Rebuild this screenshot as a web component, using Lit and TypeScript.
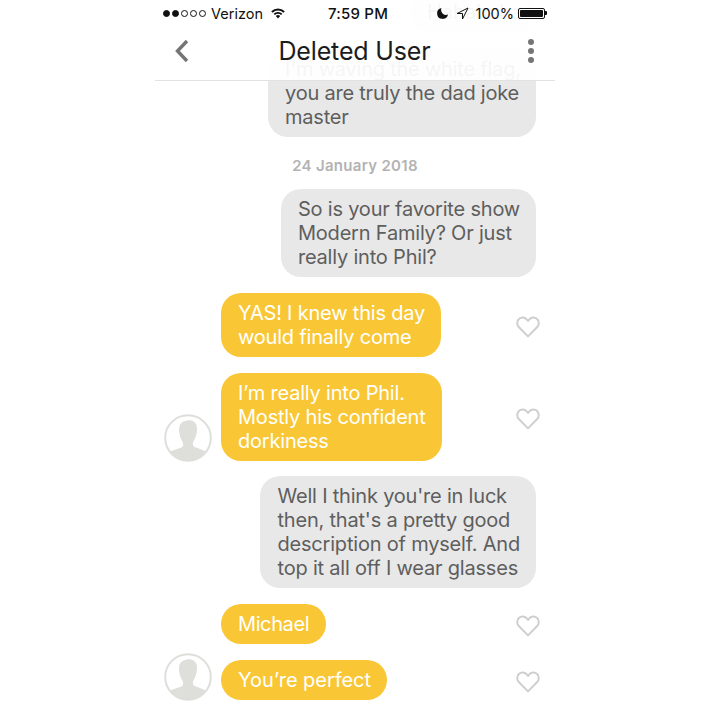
import { LitElement, html, css } from "lit";
import { customElement } from "lit/decorators.js";

const heart = html`<svg class="heart" viewBox="0 0 24 22" width="24" height="22"><path d="M12 20.4 3 11.2C.6 8.7.7 5 2.900 3 5.200.9 8.700 1.200 10.600 3.300L12 4.900l1.400-1.600C15.300 1.200 18.800.9 21.100 3c2.200 2 2.300 5.700-.1 8.200Z" fill="none" stroke="#cfcfcf" stroke-width="2" stroke-linejoin="round"/></svg>`;

const avatar = html`<svg class="avatar" viewBox="0 0 48 48" width="48" height="48"><defs><clipPath id="c"><circle cx="24" cy="24" r="22.800"/></clipPath></defs><g clip-path="url(#c)"><path d="M24 6.500c-6 0-9 3.700-9 9 0 3 .7 6.800 2 9.500 1 2.200 2.200 3.600 2.200 5.500 0 2-1.200 3-4 3.800L6 37.500 3 48h42l-3-10.500-9.200-3.700c-2.800-.8-4-1.800-4-3.800 0-1.900 1.200-3.300 2.200-5.500 1.300-2.700 2-6.500 2-9.500 0-5.300-3-9-9-9Z" fill="#dededb"/></g><circle cx="24" cy="24" r="22.800" fill="none" stroke="#dededb" stroke-width="2"/></svg>`;

@customElement("app-root")
export class AppRoot extends LitElement {
  static styles = css`
    :host { display: block; width: 709px; height: 709px; overflow: hidden; background: #fff; font-family: Inter, "Liberation Sans", sans-serif; }
    .phone { position: relative; width: 400px; height: 709px; margin-left: 155px; overflow: hidden; }
    .list { display: flex; flex-direction: column; padding: 0 19px 0 10px; }
    .top { align-self: flex-end; margin-top: -8px; height: 41px; width: 126px; box-sizing: border-box; padding: 8px 17px; background: #e8e8e8; border-radius: 20px; color: #5c5c5c; font-size: 20px; line-height: 24px; margin-bottom: 16px; white-space: nowrap; }
    .row { display: flex; align-items: flex-end; margin-bottom: 16px; }
    .row.out { justify-content: flex-end; }
    .row.first { margin-bottom: 0; }
    .row.tight { margin-bottom: 15px; }
    .bubble { box-sizing: border-box; padding: 8px 16px 8px 17px; border-radius: 20px; font-size: 20px; line-height: 24px; letter-spacing: -0.2px; white-space: pre-line; }
    .first .bubble { width: 268px; padding: 8px 10px 8px 17px; letter-spacing: -0.22px; }
    .out .bubble { background: #e8e8e8; color: #5e5e5e; }
    .in .bubble { background: #f9c735; color: #fff; }
    .bubble.name { letter-spacing: -0.4px; padding-right: 17px; }
    .bubble.wide { letter-spacing: -0.05px; }
    .date { text-align: center; color: #b3b3b3; font-size: 15px; font-weight: 600; line-height: 20px; margin: 0 0 13px; padding: 19px 0 0 9px; letter-spacing: 0.3px; }
    .slot { width: 48px; height: 48px; margin: -7px 9px -1px -1px; flex: none; }
    .avatar { display: block; }
    .like { margin-left: auto; align-self: center; display: flex; margin-right: -4px; padding-top: 4px; }
    .heart { display: block; }
    .bar { position: absolute; top: 0; left: 0; right: 0; height: 80px; background: rgba(255,255,255,0.94); border-bottom: 1px solid #e2e2e2; }
    .status { display: flex; align-items: center; height: 26px; padding: 0 8px; font-size: 14.500px; color: #111; position: relative; }
    .dots { display: flex; gap: 2px; margin-right: 5px; }
    .dot { width: 7px; height: 7px; border-radius: 50%; border: 1px solid #111; box-sizing: border-box; }
    .dot.on { background: #111; }
    .wifi { margin-left: 7px; }
    .clock { position: absolute; left: 173px; font-size: 15px; font-weight: 500; letter-spacing: 0.2px; }
    .right { margin-left: auto; display: flex; align-items: center; gap: 4px; }
    .moon { margin-right: 3px; }
    .loc { margin-right: 3px; }
    .batt { width: 27px; height: 11px; border: 1px solid #111; border-radius: 2px; box-sizing: border-box; padding: 1px; display: flex; }
    .batt i { flex: 1; background: #111; border-radius: 1px; }
    .nib { width: 2px; height: 4px; background: #111; border-radius: 0 1px 1px 0; margin-left: -4px; }
    .nav { display: grid; grid-template-columns: 1fr auto 1fr; align-items: center; height: 50px; padding: 0 20px 0 19px; }
    .title { font-size: 25px; color: #1c1c1c; letter-spacing: -0.15px; }
    .nav svg { display: block; }
    .more { justify-self: end; }
  `;

  render() {
    return html`<div class="phone">
      <div class="list">
        <div class="top">Hahahaha</div>
        <div class="row out first"><div class="bubble">I'm waving the white flag,
you are truly the dad joke
master</div></div>
        <div class="date">24 January 2018</div>
        <div class="row out"><div class="bubble">So is your favorite show
Modern Family? Or just
really into Phil?</div></div>
        <div class="row in"><div class="slot"></div><div class="bubble">YAS! I knew this day
would finally come</div><div class="like">${heart}</div></div>
        <div class="row in tight"><div class="slot">${avatar}</div><div class="bubble">I’m really into Phil.
Mostly his confident
dorkiness</div><div class="like">${heart}</div></div>
        <div class="row out"><div class="bubble">Well I think you're in luck
then, that's a pretty good
description of myself. And
top it all off I wear glasses</div></div>
        <div class="row in"><div class="slot"></div><div class="bubble name">Michael</div><div class="like">${heart}</div></div>
        <div class="row in"><div class="slot">${avatar}</div><div class="bubble wide">You’re perfect</div><div class="like">${heart}</div></div>
      </div>
      <div class="bar">
        <div class="status">
          <div class="dots"><span class="dot on"></span><span class="dot on"></span><span class="dot"></span><span class="dot"></span><span class="dot"></span></div>
          <span>Verizon</span>
          <svg class="wifi" width="16" height="12" viewBox="0 0 16 12"><path d="M8 11.500 5.800 9a3.200 3.200 0 0 1 4.400 0Zm-3.100-3.400L3.600 6.700a6.600 6.600 0 0 1 8.800 0l-1.300 1.400a4.700 4.700 0 0 0-6.200 0ZM2.600 5.700 1.200 4.200a10 10 0 0 1 13.600 0l-1.400 1.500a8 8 0 0 0-10.800 0Z" fill="#111"/></svg>
          <span class="clock">7:59 PM</span>
          <div class="right">
            <svg class="moon" width="12" height="12" viewBox="0 0 12 12"><path d="M4.500 1A5.500 5.500 0 1 0 11 7.500 5 5 0 0 1 4.500 1Z" fill="#111"/></svg>
            <svg class="loc" width="13" height="13" viewBox="0 0 13 13"><path d="M12 1 1 6.500h5.500V12Z" fill="none" stroke="#111"/></svg>
            <span>100%</span>
            <span class="batt"><i></i></span><span class="nib"></span>
          </div>
        </div>
        <div class="nav">
          <svg width="16" height="24" viewBox="0 0 16 24"><path d="M13 2 3.500 12 13 22" fill="none" stroke="#757575" stroke-width="3.400"/></svg>
          <span class="title">Deleted User</span>
          <svg class="more" width="8" height="26" viewBox="0 0 8 26"><circle cx="4" cy="4" r="3" fill="#757575"/><circle cx="4" cy="13" r="3" fill="#757575"/><circle cx="4" cy="22" r="3" fill="#757575"/></svg>
        </div>
      </div>
    </div>`;
  }
}
